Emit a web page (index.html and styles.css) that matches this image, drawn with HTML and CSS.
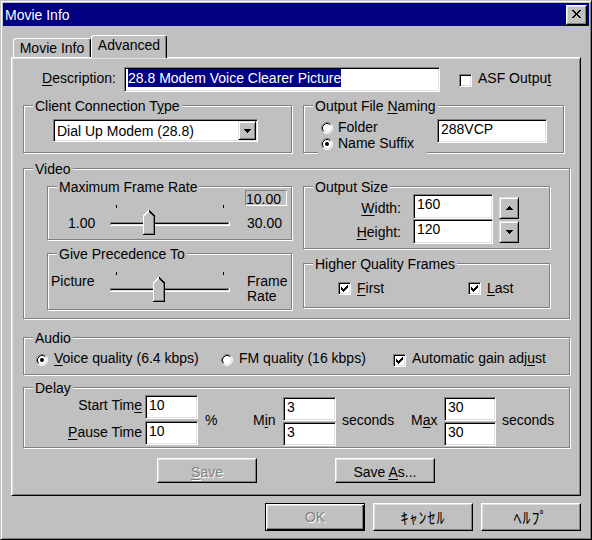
FILE: index.html
```html
<!DOCTYPE html>
<html>
<head>
<meta charset="utf-8">
<title>Movie Info</title>
<link rel="stylesheet" href="styles.css">
</head>
<body>
<div class="window">
  <div class="titlebar">
    <span class="title">Movie Info</span>
    <span class="close"><svg width="9" height="8" viewBox="0 0 9 8" shape-rendering="crispEdges"><path d="M0 0h2v1H0zM7 0h2v1H7zM1 1h2v1H1zM6 1h2v1H6zM2 2h2v1H2zM5 2h2v1H5zM3 3h3v1H3zM3 4h3v1H3zM2 5h2v1H2zM5 5h2v1H5zM1 6h2v1H1zM6 6h2v1H6zM0 7h2v1H0zM7 7h2v1H7z"/></svg></span>
  </div>
  <div class="client">
    <div class="tabs">
      <div class="tab">Movie Info</div>
      <div class="tab sel">Advanced</div>
    </div>
    <div class="panel">
      <div class="desc">
        <span class="desc-label"><u>D</u>escription:</span>
        <div class="tb desc-tb"><span class="seltext">28.8 Modem Voice Clearer Picture</span></div>
        <span class="cb asf-cb"></span>
        <span class="asf-label">ASF Outpu<u>t</u></span>
      </div>

      <div class="row2">
        <div class="group g-conn">
          <div class="gt">Client Connection T<u>y</u>pe</div>
          <div class="combo">
            <span class="combo-text">Dial Up Modem (28.8)</span>
            <span class="rbtn combo-btn"><svg width="7" height="4" viewBox="0 0 7 4" shape-rendering="crispEdges"><path d="M0 0h7v1H0zM1 1h5v1H1zM2 2h3v1H2zM3 3h1v1H3z"/></svg></span>
          </div>
        </div>
        <div class="group g-name">
          <div class="gt">Output File <u>N</u>aming</div>
          <div class="name-body">
            <div class="radios">
              <div class="ritem r-folder">
                <svg class="radio" width="12" height="12" viewBox="0 0 12 12"><circle cx="6" cy="6" r="5" fill="#fff"/><path d="M2.11 9.89A5.5 5.5 0 0 1 9.89 2.11" fill="none" stroke="#808080"/><path d="M9.89 2.11A5.5 5.5 0 0 1 2.11 9.89" fill="none" stroke="#fff"/><path d="M2.82 9.18A4.5 4.5 0 0 1 9.18 2.82" fill="none" stroke="#000"/><path d="M9.18 2.82A4.5 4.5 0 0 1 2.82 9.18" fill="none" stroke="#dfdfdf"/></svg>
                <span>Folder</span>
              </div>
              <div class="ritem r-suffix">
                <svg class="radio" width="12" height="12" viewBox="0 0 12 12"><circle cx="6" cy="6" r="5" fill="#fff"/><path d="M2.11 9.89A5.5 5.5 0 0 1 9.89 2.11" fill="none" stroke="#808080"/><path d="M9.89 2.11A5.5 5.5 0 0 1 2.11 9.89" fill="none" stroke="#fff"/><path d="M2.82 9.18A4.5 4.5 0 0 1 9.18 2.82" fill="none" stroke="#000"/><path d="M9.18 2.82A4.5 4.5 0 0 1 2.82 9.18" fill="none" stroke="#dfdfdf"/><circle cx="6" cy="6" r="2" fill="#000"/></svg>
                <span>Name Suffix</span>
              </div>
            </div>
            <div class="tb name-tb">288VCP</div>
          </div>
        </div>
      </div>

      <div class="group g-video">
        <div class="gt">Video</div>
        <div class="video-body">
          <div class="vcol">
            <div class="group g-mfr">
              <div class="gt">Maximum Frame Rate</div>
              <div class="sl-row">
                <div class="sl-left mfr-left">1.00</div>
                <svg class="slider" width="120" height="31" viewBox="0 0 120 31" shape-rendering="crispEdges">
                  <rect x="6" y="0" width="1" height="3"/>
                  <rect x="113" y="0" width="1" height="3"/>
                  <rect x="0" y="17" width="120" height="4" fill="#fff"/>
                  <rect x="0" y="17" width="119" height="3" fill="#808080"/>
                  <rect x="1" y="18" width="117" height="1" fill="#000"/>
                  <rect x="1" y="19" width="118" height="1" fill="#dfdfdf"/>
                  <g transform="translate(33 5)">
                    <path d="M0 6L6 0L12 6V25H0Z" fill="#c0c0c0"/>
                    <path d="M0.5 24V6.2L6 0.7" stroke="#fff" fill="none"/>
                    <path d="M6 0.7L11.5 6.2V24.5H0" stroke="#000" fill="none"/>
                    <path d="M6 1.9L10.5 6.4V23.5H1" stroke="#808080" fill="none"/>
                  </g>
                </svg>
                <div class="mfr-right">
                  <div class="valbox">10.00</div>
                  <div class="mfr-max">30.00</div>
                </div>
              </div>
            </div>
            <div class="group g-gp">
              <div class="gt">Give Precedence To</div>
              <div class="sl-row">
                <div class="sl-left gp-left">Picture</div>
                <svg class="slider" width="120" height="31" viewBox="0 0 120 31" shape-rendering="crispEdges">
                  <rect x="6" y="0" width="1" height="3"/>
                  <rect x="113" y="0" width="1" height="3"/>
                  <rect x="0" y="16" width="120" height="4" fill="#fff"/>
                  <rect x="0" y="16" width="119" height="3" fill="#808080"/>
                  <rect x="1" y="17" width="117" height="1" fill="#000"/>
                  <rect x="1" y="18" width="118" height="1" fill="#dfdfdf"/>
                  <g transform="translate(43 5)">
                    <path d="M0 6L6 0L12 6V25H0Z" fill="#c0c0c0"/>
                    <path d="M0.5 24V6.2L6 0.7" stroke="#fff" fill="none"/>
                    <path d="M6 0.7L11.5 6.2V24.5H0" stroke="#000" fill="none"/>
                    <path d="M6 1.9L10.5 6.4V23.5H1" stroke="#808080" fill="none"/>
                  </g>
                </svg>
                <div class="gp-right">Frame<br>Rate</div>
              </div>
            </div>
          </div>
          <div class="vcol">
            <div class="group g-os">
              <div class="gt">Output Size</div>
              <div class="os-body">
                <div class="os-labels">
                  <div><u>W</u>idth:</div>
                  <div><u>H</u>eight:</div>
                </div>
                <div class="os-boxes">
                  <div class="tb">160</div>
                  <div class="tb">120</div>
                </div>
                <div class="spins">
                  <span class="rbtn spin"><svg width="7" height="4" viewBox="0 0 7 4" shape-rendering="crispEdges"><path d="M3 0h1v1H3zM2 1h3v1H2zM1 2h5v1H1zM0 3h7v1H0z"/></svg></span>
                  <span class="rbtn spin"><svg width="7" height="4" viewBox="0 0 7 4" shape-rendering="crispEdges"><path d="M0 0h7v1H0zM1 1h5v1H1zM2 2h3v1H2zM3 3h1v1H3z"/></svg></span>
                </div>
              </div>
            </div>
            <div class="group g-hqf">
              <div class="gt">Higher Quality Frames</div>
              <div class="hqf-body">
                <div class="cbitem">
                  <span class="cb"><svg width="7" height="7" viewBox="0 0 7 7" shape-rendering="crispEdges"><path d="M0 2h1v3H0zM1 3h1v3H1zM2 4h1v3H2zM3 3h1v3H3zM4 2h1v3H4zM5 1h1v3H5zM6 0h1v3H6z"/></svg></span>
                  <span><u>F</u>irst</span>
                </div>
                <div class="cbitem">
                  <span class="cb"><svg width="7" height="7" viewBox="0 0 7 7" shape-rendering="crispEdges"><path d="M0 2h1v3H0zM1 3h1v3H1zM2 4h1v3H2zM3 3h1v3H3zM4 2h1v3H4zM5 1h1v3H5zM6 0h1v3H6z"/></svg></span>
                  <span><u>L</u>ast</span>
                </div>
              </div>
            </div>
          </div>
        </div>
      </div>

      <div class="group g-audio">
        <div class="gt">Audio</div>
        <div class="audio-body">
          <div class="aitem a-voice">
            <svg class="radio" width="12" height="12" viewBox="0 0 12 12"><circle cx="6" cy="6" r="5" fill="#fff"/><path d="M2.11 9.89A5.5 5.5 0 0 1 9.89 2.11" fill="none" stroke="#808080"/><path d="M9.89 2.11A5.5 5.5 0 0 1 2.11 9.89" fill="none" stroke="#fff"/><path d="M2.82 9.18A4.5 4.5 0 0 1 9.18 2.82" fill="none" stroke="#000"/><path d="M9.18 2.82A4.5 4.5 0 0 1 2.82 9.18" fill="none" stroke="#dfdfdf"/><circle cx="6" cy="6" r="2" fill="#000"/></svg>
            <span><u>V</u>oice quality (6.4 kbps)</span>
          </div>
          <div class="aitem a-fm">
            <svg class="radio" width="12" height="12" viewBox="0 0 12 12"><circle cx="6" cy="6" r="5" fill="#fff"/><path d="M2.11 9.89A5.5 5.5 0 0 1 9.89 2.11" fill="none" stroke="#808080"/><path d="M9.89 2.11A5.5 5.5 0 0 1 2.11 9.89" fill="none" stroke="#fff"/><path d="M2.82 9.18A4.5 4.5 0 0 1 9.18 2.82" fill="none" stroke="#000"/><path d="M9.18 2.82A4.5 4.5 0 0 1 2.82 9.18" fill="none" stroke="#dfdfdf"/></svg>
            <span>FM quality (16 kbps)</span>
          </div>
          <div class="aitem">
            <span class="cb"><svg width="7" height="7" viewBox="0 0 7 7" shape-rendering="crispEdges"><path d="M0 2h1v3H0zM1 3h1v3H1zM2 4h1v3H2zM3 3h1v3H3zM4 2h1v3H4zM5 1h1v3H5zM6 0h1v3H6z"/></svg></span>
            <span>Automatic gain adj<u>u</u>st</span>
          </div>
        </div>
      </div>

      <div class="group g-delay">
        <div class="gt">Delay</div>
        <div class="delay-body">
          <div class="dl-labels">
            <div>Start Tim<u>e</u></div>
            <div><u>P</u>ause Time</div>
          </div>
          <div class="dl-b1">
            <div class="tb">10</div>
            <div class="tb">10</div>
          </div>
          <div class="dl-pct">%</div>
          <div class="dl-min">M<u>i</u>n</div>
          <div class="dl-b2">
            <div class="tb">3</div>
            <div class="tb">3</div>
          </div>
          <div class="dl-sec">seconds</div>
          <div class="dl-max">M<u>a</u>x</div>
          <div class="dl-b2 dl-b3">
            <div class="tb">30</div>
            <div class="tb">30</div>
          </div>
          <div class="dl-sec2">seconds</div>
        </div>
      </div>

      <div class="save-row">
        <div class="btn disabled"><span><u>S</u>ave</span></div>
        <div class="btn"><span>Save <u>A</u>s...</span></div>
      </div>
    </div>

    <div class="buttons">
      <div class="btn big default disabled"><span>OK</span></div>
      <div class="btn big"><span class="jp">ｷｬﾝｾﾙ</span></div>
      <div class="btn big"><span class="jp">ﾍﾙﾌﾟ</span></div>
    </div>
  </div>
</div>
</body>
</html>
```
FILE: styles.css
```css
* { box-sizing: border-box; }
html, body { margin: 0; }
body {
  background: #c0c0c0;
  font-family: "Liberation Sans", Arial, "Noto Sans CJK JP", sans-serif;
  font-size: 14px;
  line-height: 16px;
  color: #000;
}
u { text-decoration: underline; text-underline-offset: 2px; }
svg { display: block; flex: none; }

.window {
  width: 592px;
  height: 540px;
  background: #c0c0c0;
  border: 1px solid;
  border-color: #c0c0c0 #000 #000 #c0c0c0;
  box-shadow: inset 1px 1px #fff, inset -1px -1px #808080;
  padding: 2px;
  display: flex;
  flex-direction: column;
}

.titlebar {
  flex: none;
  height: 23px;
  background: #000080;
  color: #fff;
  display: flex;
  align-items: flex-start;
  justify-content: space-between;
  padding: 0 2px;
}
.title { margin-top: 4px; }
.close {
  width: 21px;
  height: 20px;
  margin-top: 2px;
  background: #c0c0c0;
  border: 1px solid;
  border-color: #fff #000 #000 #fff;
  box-shadow: inset -1px -1px #808080, inset 1px 1px #dfdfdf;
  padding: 4px 0 0 5px;
}

.client {
  flex: 1;
  display: flex;
  flex-direction: column;
  padding: 9px 8px 0;
}

.tabs {
  flex: none;
  display: flex;
  align-items: flex-end;
  height: 23px;
  padding-left: 2px;
  z-index: 1;
}
.tab {
  width: 78px;
  height: 19px;
  margin-bottom: 1px;
  background: #c0c0c0;
  border: 1px solid;
  border-bottom: 0;
  border-color: #fff #000 #000 #fff;
  border-radius: 3px 3px 0 0;
  box-shadow: inset -1px 0 #808080;
  text-align: center;
  padding-top: 1px;
}
.tab.sel {
  width: 76px;
  height: 23px;
  margin-bottom: 0;
}

.panel {
  flex: none;
  margin-top: -1px;
  height: 439px;
  border: 1px solid;
  border-color: #fff #000 #000 #fff;
  box-shadow: inset 1px 1px #dfdfdf, inset -1px -1px #808080;
  padding: 9px 10px 0 11px;
  display: flex;
  flex-direction: column;
}

/* sunken text box */
.tb {
  background: #fff;
  border: 1px solid;
  border-color: #808080 #fff #fff #808080;
  box-shadow: inset 1px 1px #000, inset -1px -1px #dfdfdf;
  padding: 1px 3px;
  white-space: nowrap;
  overflow: hidden;
}
.cb {
  flex: none;
  width: 13px;
  height: 13px;
  background: #fff;
  border: 1px solid;
  border-color: #808080 #fff #fff #808080;
  box-shadow: inset 1px 1px #000, inset -1px -1px #dfdfdf;
}
.cb > svg { margin: 2px 0 0 2px; }

.rbtn {
  background: #c0c0c0;
  border: 1px solid;
  border-color: #dfdfdf #000 #000 #dfdfdf;
  box-shadow: inset 1px 1px #fff, inset -1px -1px #808080;
  display: flex;
  align-items: center;
  justify-content: center;
}

/* description row */
.desc {
  flex: none;
  display: flex;
  align-items: flex-start;
  height: 25px;
}
.desc-label { width: 82px; margin: 3px 0 0 19px; flex: none; }
.desc-tb { width: 316px; height: 25px; line-height: 18px; flex: none; }
.seltext { display: inline-block; background: #000080; color: #fff; line-height: 18px; }
.asf-cb { margin: 7px 0 0 19px; }
.asf-label { margin: 3px 0 0 6px; }

/* group boxes */
.group {
  flex: none;
  border: 1px solid #808080;
  box-shadow: inset 1px 1px #fff, 1px 1px #fff;
  display: flex;
  flex-direction: column;
}
.gt {
  align-self: flex-start;
  height: 16px;
  margin: -8px 0 -8px 9px;
  padding: 0 2px;
  background: #c0c0c0;
  white-space: nowrap;
}

.row2 { flex: none; display: flex; gap: 11px; margin-top: 13px; }
.g-conn { width: 269px; height: 48px; }
.g-name { width: 261px; height: 48px; }

.combo {
  margin: 13px 0 0 29px;
  width: 205px;
  height: 23px;
  display: flex;
  padding: 1px;
  background: #fff;
  border: 1px solid;
  border-color: #808080 #fff #fff #808080;
  box-shadow: inset 1px 1px #000, inset -1px -1px #dfdfdf;
}
.combo-text { flex: 1; padding: 2px 0 0 2px; white-space: nowrap; }
.combo-btn { width: 18px; height: 19px; flex: none; }

.name-body { display: flex; align-items: flex-start; }
.radios { margin: 12px 0 0 14px; width: 109px; flex: none; display: flex; flex-direction: column; }
.ritem {
  display: flex;
  align-items: flex-start;
  gap: 5px;
  padding: 1px 0 0 3px;
  background: #c0c0c0;
  white-space: nowrap;
}
.ritem > svg { margin-top: 3px; }
.r-folder { height: 16px; }
.r-suffix { height: 20px; }
.name-tb { margin: 13px 0 0 10px; width: 110px; height: 24px; flex: none; }

/* video */
.g-video { height: 151px; margin-top: 15px; }
.video-body { display: flex; gap: 11px; margin: 17px 0 0 23px; }
.vcol { display: flex; flex-direction: column; }
.g-mfr { width: 245px; height: 54px; }
.g-gp { width: 245px; height: 57px; margin-top: 13px; }
.g-os { width: 247px; height: 63px; }
.g-hqf { width: 247px; height: 45px; margin-top: 14px; }

.sl-row { display: flex; align-items: flex-start; }
.sl-left { width: 62px; flex: none; }
.mfr-left { padding-left: 20px; margin-top: 28px; }
.gp-left { padding-left: 3px; margin-top: 19px; }
.slider { margin-top: 18px; }
.mfr-right { margin-left: 15px; }
.valbox {
  width: 42px;
  height: 16px;
  margin-top: 3px;
  border: 1px solid;
  border-color: #808080 #fff #fff #808080;
  line-height: 16px;
  white-space: nowrap;
}
.mfr-max { margin: 9px 0 0 2px; }
.gp-right { margin: 20px 0 0 17px; line-height: 15px; }

.os-body { display: flex; align-items: flex-start; }
.os-labels { width: 97px; flex: none; text-align: right; line-height: 24px; margin-top: 9px; }
.os-boxes { margin: 7px 0 0 12px; display: flex; flex-direction: column; }
.os-boxes .tb { width: 80px; height: 25px; }
.spins { margin: 10px 0 0 6px; display: flex; flex-direction: column; gap: 2px; }
.spin { width: 20px; height: 22px; }

.hqf-body { display: flex; margin: 16px 0 0 34px; }
.cbitem { display: flex; align-items: flex-start; gap: 6px; width: 130px; flex: none; }
.cbitem > .cb { margin-top: 2px; }

/* audio */
.g-audio { height: 38px; margin-top: 18px; }
.audio-body { display: flex; margin: 12px 0 0 12px; }
.aitem { display: flex; align-items: flex-start; gap: 6px; flex: none; white-space: nowrap; }
.aitem > svg, .aitem > .cb { margin-top: 4px; }
.a-voice { width: 185px; }
.a-fm { width: 172px; }

/* delay */
.g-delay { height: 61px; margin-top: 12px; }
.delay-body { display: flex; align-items: flex-start; white-space: nowrap; }
.dl-labels { width: 118px; flex: none; text-align: right; line-height: 27px; margin-top: 4px; }
.dl-b1 { margin: 7px 0 0 3px; display: flex; flex-direction: column; gap: 2px; }
.dl-b1 .tb { width: 53px; height: 24px; }
.dl-pct { width: 48px; flex: none; margin: 24px 0 0 7px; }
.dl-min { width: 30px; flex: none; margin-top: 24px; }
.dl-b2 { margin-top: 9px; display: flex; flex-direction: column; gap: 1px; }
.dl-b2 .tb { width: 53px; height: 24px; }
.dl-b3 .tb { width: 52px; }
.dl-sec { width: 69px; flex: none; margin: 24px 0 0 6px; }
.dl-max { width: 33px; flex: none; margin-top: 24px; }
.dl-sec2 { margin: 24px 0 0 6px; }

/* buttons */
.btn {
  flex: none;
  width: 100px;
  height: 25px;
  background: #c0c0c0;
  border: 1px solid;
  border-color: #fff #000 #000 #fff;
  box-shadow: inset -1px -1px #808080, inset 1px 1px #dfdfdf;
  display: flex;
  align-items: center;
  justify-content: center;
  padding-top: 2px;
  white-space: nowrap;
}
.btn.big { height: 28px; padding-top: 0; }
.btn.default {
  border-color: #000;
  box-shadow: inset 1px 1px #fff, inset -1px -1px #000, inset -2px -2px #808080, inset 2px 2px #dfdfdf;
}
.btn.disabled { color: #808080; text-shadow: 1px 1px 0 #fff; }
.save-row { flex: none; display: flex; gap: 78px; margin: 10px 0 0 134px; }
.buttons { flex: none; display: flex; justify-content: flex-end; gap: 8px; margin-top: 7px; }
.jp { font-family: "Noto Sans CJK JP", sans-serif; font-size: 16px; letter-spacing: 1px; }
```
